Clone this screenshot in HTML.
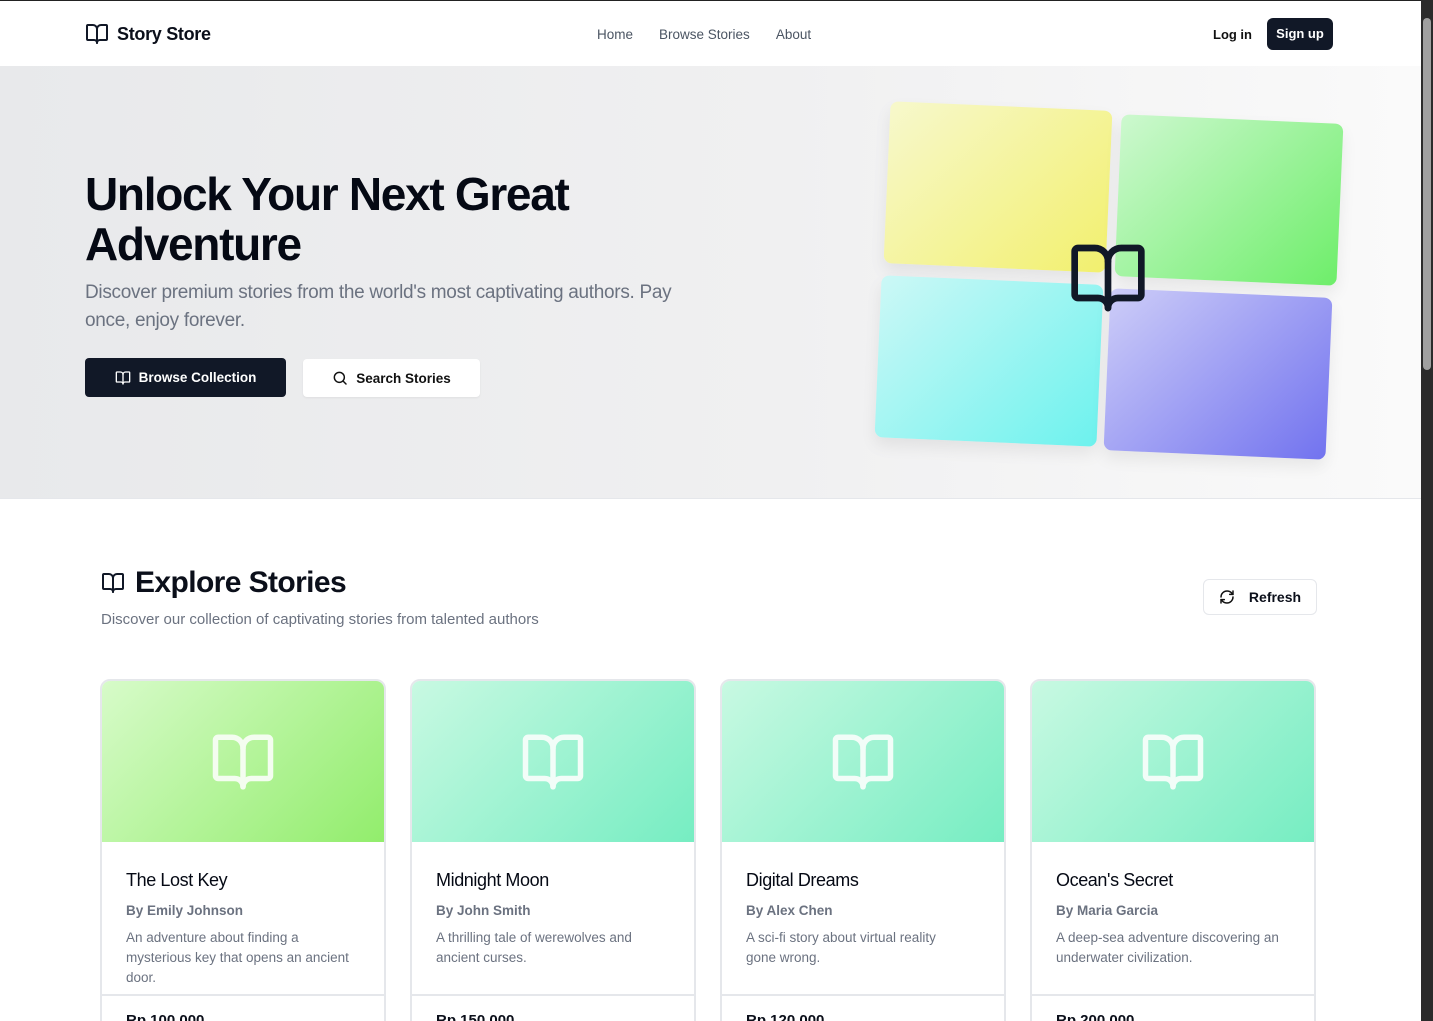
<!DOCTYPE html>
<html><head><meta charset="utf-8">
<style>
*{box-sizing:border-box;margin:0;padding:0}
html,body{width:1433px;height:1021px;overflow:hidden;background:#fff;font-family:"Liberation Sans",sans-serif;color:#0b0f1a}
.page{position:absolute;left:0;top:0;width:1421px;height:1021px;overflow:hidden;border-top:1px solid #222}
.sb{position:absolute;right:0;top:0;width:12px;height:1021px;background:#2b2b2b}
.sb .th{position:absolute;left:2px;top:18px;width:8px;height:352px;background:#a0a0a0;border-radius:4px}
header{position:absolute;top:0;left:0;width:1421px;height:65px;background:#fff}
.logo{position:absolute;left:85px;top:21px;display:flex;align-items:center;gap:8px;font-weight:bold;font-size:18px;letter-spacing:-0.3px}
nav{position:absolute;left:597px;top:26px;font-size:13.5px;color:#4b5563}
nav span{margin-right:26px}
.login{position:absolute;left:1213px;top:26px;font-size:13px;font-weight:bold;color:#111}
.signup{position:absolute;left:1267px;top:17px;width:66px;height:32px;background:#111827;color:#fff;border-radius:6px;font-size:13px;font-weight:bold;text-align:center;line-height:32px}
.hero{position:absolute;top:65px;left:0;width:1421px;height:433px;background:linear-gradient(90deg,#e8e9eb,#f0f0f1 55%,#fafafa);border-bottom:1px solid #e5e7eb}
h1{position:absolute;left:85px;top:103px;font-size:46px;line-height:50px;letter-spacing:-1.3px;font-weight:bold;color:#050914}
.sub{position:absolute;left:85px;top:213px;width:640px;font-size:19px;line-height:28px;color:#6b7280;letter-spacing:-0.3px}
.btn1{position:absolute;left:85px;top:292px;width:201px;height:39px;background:#111827;color:#fff;border-radius:4px;font-size:13.5px;font-weight:bold;display:flex;align-items:center;justify-content:center;gap:8px}
.btn2{position:absolute;left:303px;top:293px;width:177px;height:38px;background:#fff;color:#111;border-radius:4px;font-size:13.5px;font-weight:bold;display:flex;align-items:center;justify-content:center;gap:8px;box-shadow:0 1px 2px rgba(0,0,0,.06)}
.tile{position:absolute;width:222px;height:162px;border-radius:8px;transform:rotate(2.5deg);box-shadow:0 8px 16px rgba(0,0,0,.07)}
.t1{left:887px;top:40px;background:linear-gradient(135deg,#f7f8cc,#f2f06e)}
.t2{left:1118px;top:53px;background:linear-gradient(135deg,#cdf8cf,#6eee6a)}
.t3{left:878px;top:214px;background:linear-gradient(135deg,#ccf8f6,#6df2ee)}
.t4{left:1107px;top:227px;background:linear-gradient(135deg,#cdcdf8,#7273ef)}
.hicon{position:absolute;left:1068px;top:172px}
.sec{position:absolute;left:101px;top:565px;display:flex;align-items:center;gap:10px;font-size:30px;font-weight:bold;letter-spacing:-0.6px}
.secsub{position:absolute;left:101px;top:610px;font-size:15px;color:#6b7280}
.refresh{position:absolute;left:1203px;top:578px;width:114px;height:36px;border:1px solid #e5e7eb;border-radius:6px;display:flex;align-items:center;justify-content:center;gap:14px;font-size:14px;font-weight:bold;background:#fff}
.card{position:absolute;top:678px;width:286px;height:360px;border:2px solid #e5e7eb;border-radius:10px;overflow:hidden;background:#fff}
.img{height:161px;display:flex;align-items:center;justify-content:center}
.lime{background:linear-gradient(135deg,#d7fbc9,#92ed6c)}
.mint{background:linear-gradient(135deg,#c8f9e2,#76edc2)}
.body{padding:28px 24px 0 24px;height:154px;border-bottom:2px solid #e5e7eb}
.body h3{font-size:18px;font-weight:normal;letter-spacing:-0.4px;color:#050914}
.by{margin-top:12px;font-size:13.5px;font-weight:bold;color:#6b7280}
.desc{margin-top:10px;font-size:13.5px;line-height:20px;color:#6b7280;width:236px}
.price{padding:16px 24px;font-size:15px;font-weight:bold}
</style></head><body>
<div class="page">
<header>
<div class="logo"><svg width="24" height="24" viewBox="0 0 24 24" fill="none" stroke="#111827" stroke-width="2" stroke-linecap="round" stroke-linejoin="round"><path d="M12 7v14"/><path d="M3 18a1 1 0 0 1-1-1V4a1 1 0 0 1 1-1h5a4 4 0 0 1 4 4 4 4 0 0 1 4-4h5a1 1 0 0 1 1 1v13a1 1 0 0 1-1 1h-6a3 3 0 0 0-3 3 3 3 0 0 0-3-3z"/></svg>Story Store</div>
<nav><span>Home</span><span>Browse Stories</span><span>About</span></nav>
<div class="login">Log in</div>
<div class="signup">Sign up</div>
</header>
<div class="hero">
<h1>Unlock Your Next Great<br>Adventure</h1>
<div class="sub">Discover premium stories from the world's most captivating authors. Pay<br>once, enjoy forever.</div>
<div class="btn1"><svg width="16" height="16" viewBox="0 0 24 24" fill="none" stroke="#fff" stroke-width="2" stroke-linecap="round" stroke-linejoin="round"><path d="M12 7v14"/><path d="M3 18a1 1 0 0 1-1-1V4a1 1 0 0 1 1-1h5a4 4 0 0 1 4 4 4 4 0 0 1 4-4h5a1 1 0 0 1 1 1v13a1 1 0 0 1-1 1h-6a3 3 0 0 0-3 3 3 3 0 0 0-3-3z"/></svg>Browse Collection</div>
<div class="btn2"><svg width="16" height="16" viewBox="0 0 24 24" fill="none" stroke="#111" stroke-width="2.2" stroke-linecap="round"><circle cx="11" cy="11" r="7.5"/><path d="m21 21-4.3-4.3"/></svg>Search Stories</div>
<div class="tile t1"></div><div class="tile t2"></div><div class="tile t3"></div><div class="tile t4"></div>
<svg class="hicon" width="80" height="80" viewBox="0 0 24 24" fill="none" stroke="#111827" stroke-width="2" stroke-linecap="round" stroke-linejoin="round"><path d="M12 7v14"/><path d="M3 18a1 1 0 0 1-1-1V4a1 1 0 0 1 1-1h5a4 4 0 0 1 4 4 4 4 0 0 1 4-4h5a1 1 0 0 1 1 1v13a1 1 0 0 1-1 1h-6a3 3 0 0 0-3 3 3 3 0 0 0-3-3z"/></svg>
</div>
<div class="sec"><svg width="24" height="24" viewBox="0 0 24 24" fill="none" stroke="#111827" stroke-width="2" stroke-linecap="round" stroke-linejoin="round"><path d="M12 7v14"/><path d="M3 18a1 1 0 0 1-1-1V4a1 1 0 0 1 1-1h5a4 4 0 0 1 4 4 4 4 0 0 1 4-4h5a1 1 0 0 1 1 1v13a1 1 0 0 1-1 1h-6a3 3 0 0 0-3 3 3 3 0 0 0-3-3z"/></svg>Explore Stories</div>
<div class="secsub">Discover our collection of captivating stories from talented authors</div>
<div class="refresh"><svg width="16" height="16" viewBox="0 0 24 24" fill="none" stroke="#111" stroke-width="2.2" stroke-linecap="round" stroke-linejoin="round"><path d="M3 12a9 9 0 0 1 9-9 9.75 9.75 0 0 1 6.74 2.74L21 8"/><path d="M21 3v5h-5"/><path d="M21 12a9 9 0 0 1-9 9 9.75 9.75 0 0 1-6.74-2.74L3 16"/><path d="M8 16H3v5"/></svg>Refresh</div>

<div class="card" style="left:100px"><div class="img lime"><svg width="66" height="66" viewBox="0 0 24 24" fill="none" stroke="#f4fdf0" stroke-width="2" stroke-linecap="round" stroke-linejoin="round"><path d="M12 7v14"/><path d="M3 18a1 1 0 0 1-1-1V4a1 1 0 0 1 1-1h5a4 4 0 0 1 4 4 4 4 0 0 1 4-4h5a1 1 0 0 1 1 1v13a1 1 0 0 1-1 1h-6a3 3 0 0 0-3 3 3 3 0 0 0-3-3z"/></svg></div>
<div class="body"><h3>The Lost Key</h3><div class="by">By Emily Johnson</div><div class="desc">An adventure about finding a mysterious key that opens an ancient door.</div></div><div class="price">Rp 100.000</div></div>

<div class="card" style="left:410px"><div class="img mint"><svg width="66" height="66" viewBox="0 0 24 24" fill="none" stroke="#f2fdf8" stroke-width="2" stroke-linecap="round" stroke-linejoin="round"><path d="M12 7v14"/><path d="M3 18a1 1 0 0 1-1-1V4a1 1 0 0 1 1-1h5a4 4 0 0 1 4 4 4 4 0 0 1 4-4h5a1 1 0 0 1 1 1v13a1 1 0 0 1-1 1h-6a3 3 0 0 0-3 3 3 3 0 0 0-3-3z"/></svg></div>
<div class="body"><h3>Midnight Moon</h3><div class="by">By John Smith</div><div class="desc">A thrilling tale of werewolves and ancient curses.</div></div><div class="price">Rp 150.000</div></div>

<div class="card" style="left:720px"><div class="img mint"><svg width="66" height="66" viewBox="0 0 24 24" fill="none" stroke="#f2fdf8" stroke-width="2" stroke-linecap="round" stroke-linejoin="round"><path d="M12 7v14"/><path d="M3 18a1 1 0 0 1-1-1V4a1 1 0 0 1 1-1h5a4 4 0 0 1 4 4 4 4 0 0 1 4-4h5a1 1 0 0 1 1 1v13a1 1 0 0 1-1 1h-6a3 3 0 0 0-3 3 3 3 0 0 0-3-3z"/></svg></div>
<div class="body"><h3>Digital Dreams</h3><div class="by">By Alex Chen</div><div class="desc">A sci-fi story about virtual reality<br>gone wrong.</div></div><div class="price">Rp 120.000</div></div>

<div class="card" style="left:1030px"><div class="img mint"><svg width="66" height="66" viewBox="0 0 24 24" fill="none" stroke="#f2fdf8" stroke-width="2" stroke-linecap="round" stroke-linejoin="round"><path d="M12 7v14"/><path d="M3 18a1 1 0 0 1-1-1V4a1 1 0 0 1 1-1h5a4 4 0 0 1 4 4 4 4 0 0 1 4-4h5a1 1 0 0 1 1 1v13a1 1 0 0 1-1 1h-6a3 3 0 0 0-3 3 3 3 0 0 0-3-3z"/></svg></div>
<div class="body"><h3>Ocean's Secret</h3><div class="by">By Maria Garcia</div><div class="desc">A deep-sea adventure discovering an underwater civilization.</div></div><div class="price">Rp 200.000</div></div>
</div>
<div class="sb"><div class="th"></div></div>
</body></html>
